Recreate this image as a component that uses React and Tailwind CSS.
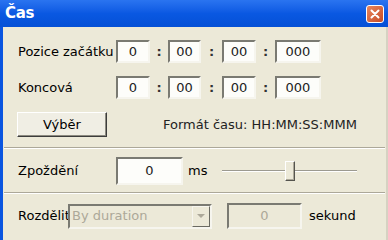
import React from "react";

const font = { fontFamily: "Tahoma, 'DejaVu Sans', sans-serif" };

const Edit = ({ w, h = "h-[23px]", value, disabled }) => (
  <div
    className={`${w} ${h} flex items-center justify-center border-2 border-t-[#7a7a72] border-l-[#7a7a72] border-r-[#f6f5ee] border-b-[#f6f5ee] ${
      disabled ? "bg-[#ece9d8] text-[#aca899]" : "bg-[#fdfdfa] text-[#222]"
    }`}
  >
    {value}
  </div>
);

const Colon = ({ w }) => (
  <div className={`${w} text-center font-bold text-[#333]`}>:</div>
);

const Separator = () => (
  <div className="mx-[1px] border-t border-t-[#aca899] border-b border-b-white" />
);

const TimeRow = ({ label, top }) => (
  <div className={`flex items-center ${top} pl-[15px]`}>
    <div className="w-[98px] whitespace-nowrap">{label}</div>
    <Edit w="w-[34px]" value="0" />
    <Colon w="w-[18px]" />
    <Edit w="w-[33px]" value="00" />
    <Colon w="w-[21px]" />
    <Edit w="w-[34px]" value="00" />
    <Colon w="w-[19px]" />
    <Edit w="w-[46px]" value="000" />
  </div>
);

export default function App() {
  return (
    <div
      className="w-[388px] h-[240px] overflow-hidden flex flex-col text-[13px] text-black"
      style={font}
    >
      {/* title bar */}
      <div className="h-[27px] flex items-center justify-between bg-gradient-to-b from-[#2a74f0] via-[#0a58e2] to-[#0550d6] pl-[5px] pr-[4px]">
        <span className="text-white font-bold text-[15px] tracking-tight">Čas</span>
        <div className="w-[18px] h-[18px] rounded-[3px] border border-white bg-gradient-to-br from-[#e8865c] to-[#c64a24] flex items-center justify-center">
          <svg width="10" height="10" viewBox="0 0 10 10">
            <path d="M1.5 1.5 L8.5 8.5 M8.5 1.5 L1.5 8.5" stroke="white" strokeWidth="2" strokeLinecap="round" />
          </svg>
        </div>
      </div>

      {/* body */}
      <div className="flex-1 bg-[#ece9d8] border-l-[3px] border-l-[#0a55e0] border-r-2 border-r-[#d6d2c2] flex flex-col">
        <TimeRow label="Pozice začátku" top="mt-[13px]" />
        <TimeRow label="Koncová" top="mt-[13px]" />

        <div className="flex items-center mt-[13px] pl-[14px]">
          <div className="w-[90px] h-[25px] flex items-center justify-center border border-[#3c3c3c] border-t-white border-l-white shadow-[inset_-1px_-1px_0_#8c8a80] bg-[#f0eee4]">
            Výběr
          </div>
          <div className="ml-[56px] whitespace-nowrap text-[#222]">Formát času: HH:MM:SS:MMM</div>
        </div>

        <div className="mt-[10px]">
          <Separator />
        </div>

        <div className="flex items-center mt-[8px] pl-[15px]">
          <div className="w-[98px]">Zpoždění</div>
          <Edit w="w-[67px]" h="h-[28px]" value="0" />
          <div className="ml-[5px] w-[34px]">ms</div>
          <div className="relative w-[135px] h-[20px] flex items-center">
            <div className="w-full border-t border-t-[#9c9a90] border-b border-b-white" />
            <div className="absolute left-[63px] top-[0px] w-[10px] h-[20px] bg-[#ece9d8] border border-t-white border-l-white border-r-[#55544e] border-b-[#55544e] shadow-[inset_-1px_-1px_0_#aca899]" />
          </div>
        </div>

        <div className="mt-[7px]">
          <Separator />
        </div>

        <div className="flex items-center mt-[9px] pl-[15px]">
          <div className="w-[50px] overflow-hidden whitespace-nowrap">Rozdělit</div>
          <div className="w-[144px] h-[25px] flex items-center justify-between border-2 border-t-[#7a7a72] border-l-[#7a7a72] border-r-[#f6f5ee] border-b-[#f6f5ee] bg-[#ece9d8] pl-[2px]">
            <span className="text-[#aca899]">By duration</span>
            <div className="w-[18px] h-full flex items-center justify-center border border-t-[#f6f5ee] border-l-[#f6f5ee] border-r-[#6a6a62] border-b-[#6a6a62]">
              <svg width="8" height="5" viewBox="0 0 8 5">
                <path d="M0 0 H8 L4 4 Z" fill="#aca899" />
              </svg>
            </div>
          </div>
          <div className="ml-[15px]">
            <Edit w="w-[75px]" h="h-[26px]" value="0" disabled />
          </div>
          <div className="ml-[7px]">sekund</div>
        </div>
      </div>
    </div>
  );
}
